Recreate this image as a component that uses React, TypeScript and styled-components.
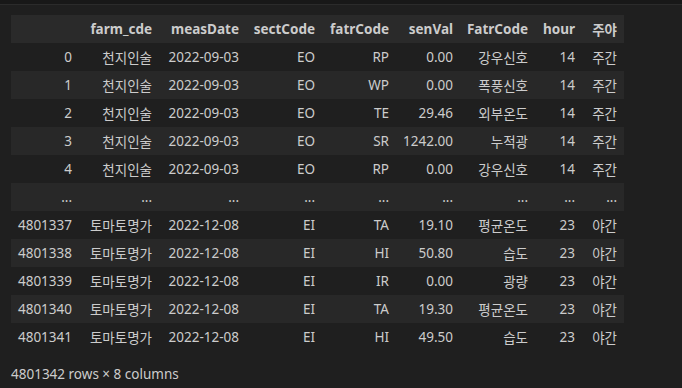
import React from "react";
import styled, { createGlobalStyle } from "styled-components";

const Global = createGlobalStyle`
  html, body { margin: 0; padding: 0; background: #1f1f1f; }
  body { width: 682px; height: 388px; overflow: hidden; }
`;

const Page = styled.div`
  width: 682px;
  height: 388px;
  background: #1f1f1f;
  display: flex;
  flex-direction: column;
  font-family: "Noto Sans", "Noto Sans CJK KR", sans-serif;
  color: #cccccc;
`;

const TopBand = styled.div`
  height: 4px;
  background: #181818;
  border-bottom: 1px solid #2b2b2b;
  flex-shrink: 0;
`;

const Output = styled.div`
  padding: 10px 0 0 11px;
  display: flex;
  flex-direction: column;
`;

const Table = styled.table`
  border-collapse: collapse;
  border-spacing: 0;
  table-layout: fixed;
  font-size: 13.5px;
  width: 613px;
`;

const HeadRow = styled.tr`
  background: #2a2a2a;
  height: 28px;
`;

const Row = styled.tr<{ $alt: boolean }>`
  background: ${(p) => (p.$alt ? "#282828" : "transparent")};
  height: 28px;
`;

const Th = styled.th<{ $w: number }>`
  box-sizing: border-box;
  width: ${(p) => p.$w}px;
  text-align: right;
  font-weight: 700;
  padding: 0 7px 0 0;
  white-space: nowrap;
  color: #cccccc;
`;

const Td = styled.td`
  text-align: right;
  padding: 0 7px 0 0;
  white-space: nowrap;
  color: #cccccc;
`;

const Footer = styled.div`
  font-size: 13.5px;
  margin-top: 14px;
  color: #cccccc;
`;

const widths = [68, 80, 87, 76, 74, 64, 75, 47, 42];
const headers = ["", "farm_cde", "measDate", "sectCode", "fatrCode", "senVal", "FatrCode", "hour", "주야"];

const rows: string[][] = [
  ["0", "천지인술", "2022-09-03", "EO", "RP", "0.00", "강우신호", "14", "주간"],
  ["1", "천지인술", "2022-09-03", "EO", "WP", "0.00", "폭풍신호", "14", "주간"],
  ["2", "천지인술", "2022-09-03", "EO", "TE", "29.46", "외부온도", "14", "주간"],
  ["3", "천지인술", "2022-09-03", "EO", "SR", "1242.00", "누적광", "14", "주간"],
  ["4", "천지인술", "2022-09-03", "EO", "RP", "0.00", "강우신호", "14", "주간"],
  ["...", "...", "...", "...", "...", "...", "...", "...", "..."],
  ["4801337", "토마토명가", "2022-12-08", "EI", "TA", "19.10", "평균온도", "23", "야간"],
  ["4801338", "토마토명가", "2022-12-08", "EI", "HI", "50.80", "습도", "23", "야간"],
  ["4801339", "토마토명가", "2022-12-08", "EI", "IR", "0.00", "광량", "23", "야간"],
  ["4801340", "토마토명가", "2022-12-08", "EI", "TA", "19.30", "평균온도", "23", "야간"],
  ["4801341", "토마토명가", "2022-12-08", "EI", "HI", "49.50", "습도", "23", "야간"],
];

export default function App() {
  return (
    <Page>
      <Global />
      <TopBand />
      <Output>
        <Table>
          <thead>
            <HeadRow>
              {headers.map((h, i) => (
                <Th key={i} $w={widths[i]}>{h}</Th>
              ))}
            </HeadRow>
          </thead>
          <tbody>
            {rows.map((r, ri) => (
              <Row key={ri} $alt={ri % 2 === 1}>
                {r.map((c, ci) => (
                  <Td key={ci}>{c}</Td>
                ))}
              </Row>
            ))}
          </tbody>
        </Table>
        <Footer>4801342 rows × 8 columns</Footer>
      </Output>
    </Page>
  );
}
